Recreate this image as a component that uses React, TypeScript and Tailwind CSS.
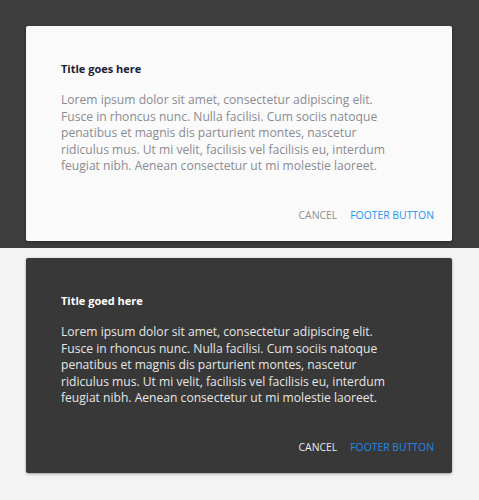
import React from "react";

const body =
  "Lorem ipsum dolor sit amet, consectetur adipiscing elit. Fusce in rhoncus nunc. Nulla facilisi. Cum sociis natoque penatibus et magnis dis parturient montes, nascetur ridiculus mus. Ut mi velit, facilisis vel facilisis eu, interdum feugiat nibh. Aenean consectetur ut mi molestie laoreet.";

function Card({ dark, title }: { dark: boolean; title: string }) {
  return (
    <div
      className={
        "w-[426px] h-[215px] rounded-[2px] flex flex-col shadow-[0_1px_3px_rgba(0,0,0,0.35)] " +
        (dark ? "bg-[#383838]" : "bg-[#fafafa]")
      }
    >
      <div className="px-[35px] pt-[34px]">
        <div
          className={
            "text-[11px] leading-[18px] font-bold " +
            (dark ? "text-white" : "text-[#1b2035]")
          }
        >
          {title}
        </div>
        <p
          className={
            "mt-[14px] w-[336px] text-[12.1px] leading-[16.6px] " +
            (dark ? "text-[#e6e6e6]" : "text-[#8b8b93]")
          }
        >
          {body}
        </p>
      </div>
      <div className="mt-auto mb-[18px] mr-[18px] flex justify-end items-center gap-[13px] text-[10.4px] leading-[16px]">
        <span className={dark ? "text-[#ececec]" : "text-[#8e8e96]"}>CANCEL</span>
        <span className={dark ? "text-[#1e88e5]" : "text-[#2196f3]"}>FOOTER BUTTON</span>
      </div>
    </div>
  );
}

export default function App() {
  return (
    <div
      className="w-[479px] h-[500px] overflow-hidden"
      style={{ fontFamily: '"Open Sans", "Noto Sans", sans-serif' }}
    >
      <section className="bg-[#3d3d3d] h-[248px] pt-[26px] pl-[26px]">
        <Card dark={false} title="Title goes here" />
      </section>
      <section className="bg-[#f3f3f3] h-[252px] pt-[10px] pl-[26px]">
        <Card dark={true} title="Title goed here" />
      </section>
    </div>
  );
}
